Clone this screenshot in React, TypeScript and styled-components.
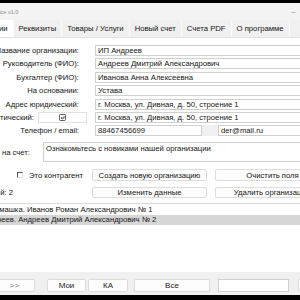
import styled, { createGlobalStyle } from "styled-components";

const GlobalStyle = createGlobalStyle`
  html, body {
    margin: 0;
    padding: 0;
    width: 300px;
    height: 300px;
    overflow: hidden;
    background: #000;
  }
  body {
    font-family: "Liberation Sans", Arial, sans-serif;
  }
`;

const Window = styled.div`
  margin: 3px 0 0 -60px;
  width: 426px;
  height: 292px;
  background: #f0f0f0;
  display: flex;
  flex-direction: column;
  font-size: 7.7px;
  color: #151515;
`;

const TitleBar = styled.div`
  height: 17px;
  flex: none;
  display: flex;
  align-items: center;
  background: #f3f3f3;
  padding-left: 49px;
`;

const Title = styled.div`
  flex: 1;
  font-size: 5.5px;
  color: #8a8a8a;
`;

const WinControl = styled.div`
  width: 29px;
  height: 17px;
  display: flex;
  align-items: center;
  justify-content: center;
  color: #888;
  font-size: 7px;
`;

const TabStrip = styled.div`
  height: 17px;
  flex: none;
  display: flex;
  padding-left: 16px;
  background: #f0f0f0;
  border-bottom: 1px solid #e2e2e2;
`;

const Tab = styled.div<{ $active?: boolean }>`
  display: flex;
  align-items: center;
  padding: 0 5px;
  background: ${(p) => (p.$active ? "#fff" : "#f0f0f0")};
  border-right: 1px solid #fafafa;
  white-space: nowrap;
`;

const Page = styled.div`
  flex: 1;
  background: #fff;
  display: flex;
  flex-direction: column;
  padding-top: 7px;
  min-height: 0;
`;

const FieldGrid = styled.div`
  display: grid;
  grid-template-columns: 139px 1fr;
  column-gap: 16px;
  row-gap: 2.4px;
  padding-right: 16px;
`;

const Label = styled.div`
  height: 11px;
  line-height: 11px;
  text-align: right;
  white-space: nowrap;
`;

const LabelWithButton = styled.div`
  height: 11px;
  display: flex;
  align-items: center;
  justify-content: flex-end;
  gap: 4px;
  margin-right: -8px;
  white-space: nowrap;
`;

const SmallButton = styled.div`
  width: 49px;
  height: 11px;
  box-sizing: border-box;
  border: 1px solid #e2e2e2;
  background: #fff;
  display: flex;
  align-items: center;
  justify-content: center;
`;

const Input = styled.div<{ $width?: number }>`
  height: 11px;
  box-sizing: border-box;
  border: 1px solid #cfcfcf;
  background: #fff;
  padding: 0 2px;
  line-height: 9px;
  white-space: nowrap;
  overflow: hidden;
  ${(p) => (p.$width ? `width: ${p.$width}px; flex: none;` : "flex: 1;")}
`;

const Pair = styled.div`
  display: flex;
`;

const PairGap = styled.div`
  width: 16px;
  height: 11px;
  flex: none;
  background: #f0f0f0;
`;

const NoteRow = styled.div`
  display: flex;
  align-items: center;
  gap: 13px;
  margin-top: 6px;
  padding-right: 16px;
`;

const NoteLabel = styled.div`
  width: 90px;
  flex: none;
  text-align: right;
  white-space: nowrap;
`;

const TextArea = styled.div`
  flex: 1;
  height: 20px;
  box-sizing: border-box;
  border: 1px solid #cfcfcf;
  padding: 1px 2px;
  white-space: nowrap;
`;

const Actions = styled.div`
  display: grid;
  grid-template-columns: 144px 115px 115px;
  column-gap: 8px;
  row-gap: 6px;
  margin-top: 7px;
`;

const CheckCell = styled.label`
  display: flex;
  align-items: center;
  gap: 6px;
  padding-left: 77px;
  white-space: nowrap;
`;

const CheckBox = styled.span`
  width: 4px;
  height: 4px;
  border: 1px solid;
  border-color: #555 #e0e0e0 #e0e0e0 #555;
`;

const CountCell = styled.div`
  display: flex;
  align-items: center;
  justify-content: flex-end;
  padding-right: 71px;
  white-space: nowrap;
`;

const Button = styled.div<{ $h?: number }>`
  height: ${(p) => p.$h ?? 12}px;
  box-sizing: border-box;
  border: 1px solid #dcdcdc;
  border-radius: 2px;
  background: #fdfdfd;
  display: flex;
  align-items: center;
  justify-content: center;
  white-space: nowrap;
`;

const List = styled.div`
  flex: 1;
  margin: 5px 0 0 26px;
  border-top: 1px solid #dadada;
  padding-top: 1px;
  background: #fff;
`;

const ListItem = styled.div<{ $selected?: boolean }>`
  height: 10px;
  line-height: 10px;
  padding-left: 4px;
  white-space: nowrap;
  background: ${(p) => (p.$selected ? "#d6d6d6" : "#fff")};
`;

const BottomBar = styled.div`
  height: 23px;
  flex: none;
  display: flex;
  align-items: flex-start;
  padding-top: 7px;
  box-sizing: border-box;
  background: #f0f0f0;
`;

const BarButton = styled.div<{ $w: number; $ml: number; $dim?: boolean }>`
  width: ${(p) => p.$w}px;
  margin-left: ${(p) => p.$ml}px;
  height: 13px;
  box-sizing: border-box;
  border: 1px solid #dcdcdc;
  border-radius: 2px;
  background: #fdfdfd;
  display: flex;
  align-items: center;
  justify-content: center;
  font-size: 8px;
  color: ${(p) => (p.$dim ? "#808080" : "#222")};
`;

const SearchBox = styled.div<{ $w: number; $ml: number }>`
  width: ${(p) => p.$w}px;
  margin-left: ${(p) => p.$ml}px;
  height: 13px;
  box-sizing: border-box;
  border: 1px solid #cfcfcf;
  background: #fff;
`;

const PasteIcon = () => (
  <svg width="7" height="7" viewBox="0 0 7 7" fill="none" stroke="#333" strokeWidth="0.8">
    <rect x="0.5" y="0.5" width="6" height="6" rx="1" />
    <path d="M5 2v2.2H2.2M3.2 3.2L2.1 4.2l1.1 1" />
  </svg>
);

const tabs = ["Организации", "Реквизиты", "Товары / Услуги", "Новый счет", "Счета PDF", "О программе"];

const App = () => {
  return (
    <>
      <GlobalStyle />
      <Window>
        <TitleBar>
          <Title>Invoice v1.0</Title>
          <WinControl>–</WinControl>
          <WinControl>□</WinControl>
          <WinControl>✕</WinControl>
        </TitleBar>
        <TabStrip>
          {tabs.map((t, i) => (
            <Tab key={t} $active={i === 0}>
              {t}
            </Tab>
          ))}
        </TabStrip>
        <Page>
          <FieldGrid>
            <Label>Название организации:</Label>
            <Input>ИП Андреев</Input>
            <Label>Руководитель (ФИО):</Label>
            <Input>Андреев Дмитрий Александрович</Input>
            <Label>Бухгалтер (ФИО):</Label>
            <Input>Иванова Анна Алексеевна</Input>
            <Label>На основании:</Label>
            <Input>Устава</Input>
            <Label>Адрес юридический:</Label>
            <Input>г. Москва, ул. Дивная, д. 50, строение 1</Input>
            <LabelWithButton>
              Адрес фактический:
              <SmallButton>
                <PasteIcon />
              </SmallButton>
            </LabelWithButton>
            <Input>г. Москва, ул. Дивная, д. 50, строение 1</Input>
            <Label>Телефон / email:</Label>
            <Pair>
              <Input $width={107}>88467456699</Input>
              <PairGap />
              <Input>der@mail.ru</Input>
            </Pair>
          </FieldGrid>
          <NoteRow>
            <NoteLabel>Примечание на счет:</NoteLabel>
            <TextArea>Ознакомьтесь с новиками нашей организации</TextArea>
          </NoteRow>
          <Actions>
            <CheckCell>
              <CheckBox />
              Это контрагент
            </CheckCell>
            <Button>Создать новую организацию</Button>
            <Button>Очистить поля</Button>
            <CountCell>Организаций: 2</CountCell>
            <Button $h={11}>Изменить данные</Button>
            <Button $h={11}>Удалить организацию</Button>
          </Actions>
          <List>
            <ListItem>ООО Ромашка. Иванов Роман Александрович № 1</ListItem>
            <ListItem $selected>ИП Андреев. Андреев Дмитрий Александрович № 2</ListItem>
          </List>
          <BottomBar>
            <BarButton $w={41} $ml={8} $dim>
              &lt;&lt;
            </BarButton>
            <BarButton $w={41} $ml={5} $dim>
              &gt;&gt;
            </BarButton>
            <BarButton $w={39} $ml={12}>
              Мои
            </BarButton>
            <BarButton $w={40} $ml={2}>
              КА
            </BarButton>
            <BarButton $w={76} $ml={6}>
              Все
            </BarButton>
            <SearchBox $w={71} $ml={8} />
            <BarButton $w={40} $ml={9}>
              Найти
            </BarButton>
          </BottomBar>
        </Page>
      </Window>
    </>
  );
};

export default App;
